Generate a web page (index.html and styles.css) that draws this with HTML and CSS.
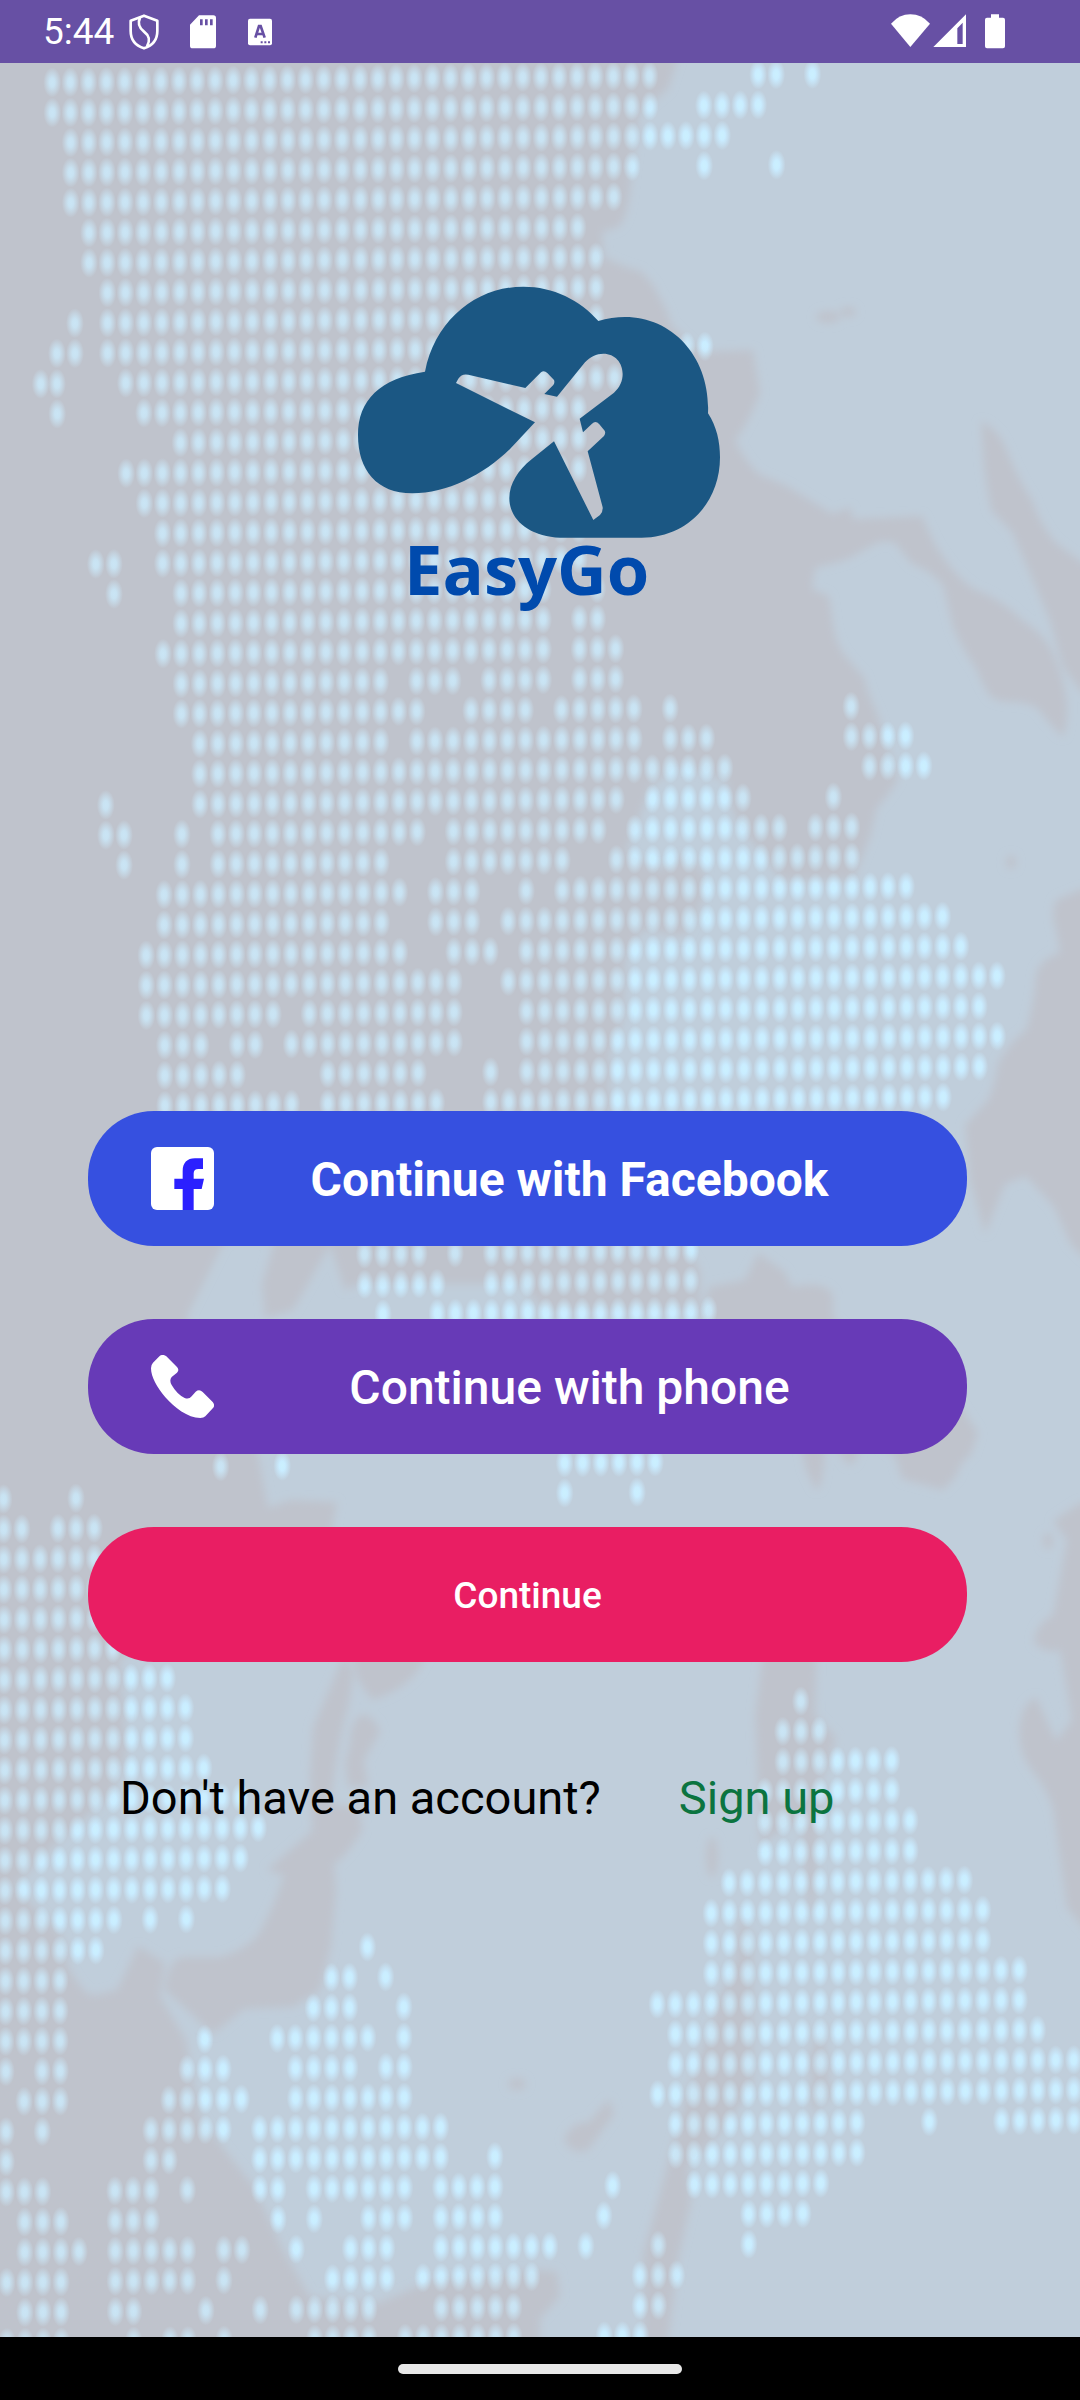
FILE: index.html
```html
<!DOCTYPE html>
<html lang="en">
<head>
<meta charset="utf-8">
<meta name="viewport" content="width=device-width, initial-scale=1">
<title>EasyGo</title>
<link rel="stylesheet" href="styles.css">
</head>
<body>
<header class="status-bar">
  <div class="status-left">
    <span class="clock">5:44</span>
    <svg width="30" height="36" viewBox="298 41 90 108" aria-hidden="true">
      <path d="M343 46 L383 61 V92 C383 118 368 136 343 144 C318 136 303 118 303 92 V61 Z" fill="none" stroke="#fff" stroke-width="8" stroke-linejoin="round"/>
      <path d="M331 52 C322 72 330 84 343 94 C360 107 362 120 352 138" fill="none" stroke="#fff" stroke-width="8"/>
    </svg>
    <svg width="28" height="36" viewBox="474 41 84 108" aria-hidden="true">
      <path fill="#fff" fill-rule="evenodd" d="M504 45 H547 Q555 45 555 53 V136 Q555 144 547 144 H485 Q477 144 477 136 V73 Z M507 57 V75 H515 V57 Z M522 57 V75 H530 V57 Z M537 57 V75 H545 V57 Z"/>
    </svg>
    <svg width="26" height="36" viewBox="651 41 78 108" aria-hidden="true">
      <rect x="654" y="55" width="72" height="80" rx="6" fill="#fff"/>
      <path d="M676 112 L687 77 H692 L704 112 M681 101 H699" fill="none" stroke="#6750a4" stroke-width="8"/>
      <path d="M692 123 H698 V129 H692 Z M703 123 H709 V129 H703 Z M714 123 H720 V129 H714 Z" fill="#6750a4"/>
    </svg>
  </div>
  <div class="status-right">
    <svg width="41" height="36" viewBox="30 41 123 108" aria-hidden="true">
      <path fill="#fff" d="M33 70 Q58 42 91 42 Q125 42 150 70 L91 140 Z"/>
    </svg>
    <svg class="signal" width="34" height="36" viewBox="159 41 102 108" aria-hidden="true">
      <path fill="#fff" fill-rule="evenodd" d="M258 42 V140 H160 Z M248 67 L232 84 V131 H248 Z"/>
    </svg>
    <svg width="22" height="36" viewBox="312 41 66 108" aria-hidden="true">
      <path fill="#fff" d="M333 42 H357 V52 H369 Q375 52 375 58 V138 Q375 144 369 144 H321 Q315 144 315 138 V58 Q315 52 321 52 H333 Z"/>
    </svg>
  </div>
</header>

<main class="screen">
  <svg class="backdrop" viewBox="0 63 1080 2274" preserveAspectRatio="xMidYMid slice" aria-hidden="true">
    <defs>
      <filter id="soft" x="-5%" y="-5%" width="110%" height="110%"><feGaussianBlur stdDeviation="4"/></filter>
      <radialGradient id="glow">
        <stop offset="0" stop-color="#0b2229"/>
        <stop offset=".3" stop-color="#0a2128" stop-opacity=".95"/>
        <stop offset=".65" stop-color="#0a2027" stop-opacity=".5"/>
        <stop offset="1" stop-color="#0a2027" stop-opacity="0"/>
      </radialGradient>
    </defs>
    <rect y="0" width="1080" height="2400" fill="#c0cedb"/>
    <g fill="#bfc3cc" filter="url(#soft)">
      <path d="M-40 20 H690 L668 89 L640 112 L631 178 Q628 226 615 228 L602 232 L604 257 Q625 268 640 271 Q655 285 657 293 Q668 310 671 325 L700 352 L753 350 L760 393 Q745 430 735 440 Q745 462 760 475 Q785 484 798 493 L833 514 L850 507 L853 519 L922 516 Q930 535 936 546 Q955 577 974 589 Q1003 600 1022 620 Q1042 633 1050 647 Q1064 675 1067 703 Q1068 725 1063 737 Q1050 725 1039 710 Q1030 702 1012 702 Q998 702 991 697 Q982 685 977 670 Q960 645 953 627 L943 585 Q930 570 912 564 L895 543 Q885 540 877 543 L846 560 L815 568 L812 589 L829 596 L833 624 Q835 640 843 653 Q855 668 864 677 Q868 695 877 713 L898 780 L884 800 L877 807 L870 837 L853 880 H781 L767 860 L747 837 L733 813 L726 780 L678 765 L650 787 L636 827 L626 853 L660 870 L685 855 L705 873 L702 903 L685 937 L643 930 L626 953 L623 1020 L609 1053 L609 1113 L700 1270 L700 1310 H544 L520 1284 H358 L345 1290 L330 1245 L293 1310 L265 1318 L262 1284 L275 1240 H225 L186 1318 L240 1400 L258 1454 L268 1508 L290 1500 L337 1502 L330 1540 L210 1600 L120 1660 L127 1754 L110 1798 L69 1831 L14 1886 L62 1935 L69 1968 Q85 1998 96 1995 L117 1990 L138 1946 L165 1963 L160 1996 L186 2040 L200 2116 L224 2149 L255 2188 L282 2248 L310 2297 L379 2303 L430 2281 L540 2270 L557 2272 L560 2296 L540 2319 V2400 H-40 Z"/>
      <path d="M981 421 Q998 430 1005 446 Q1018 480 1032 500 Q1040 525 1056 543 L1120 590 V720 L1080 690 L1063 667 L1050 621 L1032 578 L1012 532 L991 510 L984 468 Z"/>
      <path d="M1120 880 L1080 890 L1056 900 Q1050 915 1056 930 L1060 953 Q1043 957 1036 973 Q1034 1005 1026 1030 Q1010 1042 998 1063 Q995 1085 988 1100 L965 1125 L970 1180 L985 1234 L1005 1184 L1026 1176 L1054 1207 L1071 1245 L1120 1290 Z"/>
      <path d="M758 1253 L785 1272 L792 1287 Q825 1280 833 1295 V1318 L900 1380 L950 1390 L978 1433 L971 1454 Q958 1465 957 1475 L943 1490 L902 1479 L895 1456 L860 1430 Q860 1465 848 1465 L838 1450 L825 1440 Q824 1488 816 1490 L806 1470 L800 1440 L702 1318 L709 1287 L745 1280 Z"/>
      <path d="M344 1655 L353 1672 Q350 1705 344 1721 Q335 1760 331 1803 L358 1809 Q362 1820 362 1831 Q345 1858 334 1864 L336 1891 L331 1946 L320 1990 L293 2007 L244 2009 L213 2034 L165 1990 Q168 1960 182 1957 L220 1957 Q245 1950 258 1935 Q275 1905 284 1875 L267 1870 L312 1831 L310 1776 L313 1727 Z"/>
      <path d="M350 1650 H430 L417 1672 Q400 1692 372 1700 L358 1680 Z"/>
      <path d="M365 1714 Q378 1722 380 1732 L364 1760 L368 1787 L348 1787 L345 1763 L350 1743 Q350 1718 365 1714 Z"/>
      <path d="M765 1640 H817 L815 1715 L836 1738 L822 1780 L815 1908 H808 L800 1820 L760 1844 L755 1715 Z"/>
      <path d="M740 1914 L753 1938 V2084 L726 2125 L688 2167 L691 2202 L678 2260 L667 2350 H643 V2255 L667 2167 L685 2102 L716 2008 L735 1960 Z"/>
      <path d="M822 2020 L831 2096 L812 2114 L810 2055 Z"/>
      <path d="M564 2138 Q575 2120 588 2123 L609 2099 L614 2114 L588 2150 Q570 2156 564 2138 Z"/>
      <path d="M1120 1500 L1080 1503 L1053 1521 L1067 1540 L1053 1615 Q1035 1625 1034 1642 Q1045 1655 1060 1650 L1072 1720 L1056 1741 L1036 1697 Q1020 1705 1019 1732 Q1020 1755 1030 1768 Q1048 1790 1053 1809 L1067 1908 L1120 1970 Z"/>
      <ellipse cx="712" cy="1857" rx="6" ry="20"/>
      <ellipse cx="828" cy="317" rx="12" ry="6"/>
      <ellipse cx="848" cy="312" rx="8" ry="5"/>
      <ellipse cx="1011" cy="862" rx="5" ry="7"/>
      <ellipse cx="517" cy="2084" rx="9" ry="6"/>
      <ellipse cx="1048" cy="1541" rx="5" ry="8"/>
    </g>
    <g id="dots" class="dots" fill="url(#glow)"></g>
  </svg>

  <svg class="logo" viewBox="0 0 1200 1050" role="img" aria-label="EasyGo">
    <path fill="#1b5783" d="M255 305 C285 150 410 50 550 50 C640 50 720 90 775 153 C800 145 830 141 855 141 C1000 141 1112 265 1104 430 C1130 470 1140 515 1140 562 C1140 700 1040 803 905 803 L660 803 C570 800 508 750 508 685 C508 640 535 600 575 568 L642 514 L760 750 L780 735 Q789 727 788 712 L743 544 L792 498 Q798 490 794 482 L778 463 Q767 450 756 461 L729 487 L719 446 L822 368 C840 352 848 332 848 312 C848 278 825 251 790 251 C770 251 750 260 735 277 L651 380 L613 372 L640 345 Q645 338 642 330 L622 309 Q612 299 603 307 L556 354 L385 314 Q365 310 355 326 L348 339 L585 457 L510 537 C430 615 320 670 217 670 C110 670 54 600 54 495 C54 390 120 325 255 305 Z"/>
    <text class="logo-name" x="192" y="975">EasyGo</text>
  </svg>

  <div class="actions">
    <button class="btn btn-facebook" type="button">
      <svg width="63" height="63" viewBox="0 0 189 189" aria-hidden="true">
        <rect width="189" height="189" rx="18" fill="#fff"/>
        <path fill="#2b20ff" d="M95 189 V126 H70 V95 H95 V72 C95 48 108 34 132 34 H156 V66 H142 C133 66 128 70 128 79 V95 H159 L152 126 H128 V189 Z"/>
      </svg>
      <span class="btn-label">Continue with Facebook</span>
    </button>
    <button class="btn btn-phone" type="button">
      <svg width="63" height="63" viewBox="0 0 189 189" aria-hidden="true">
        <path fill="#fff" d="M26 3 Q36 -4 46 4 L78 36 Q86 46 78 53 L62 66 Q54 76 62 90 Q78 118 101 129 Q114 134 122 124 L134 110 Q145 101 155 111 L185 141 Q193 151 186 159 L163 184 Q158 189 148 189 C110 189 70 158 43 127 C18 98 0 65 0 40 Q0 29 6 23 Z"/>
      </svg>
      <span class="btn-label">Continue with phone</span>
    </button>
    <button class="btn btn-continue" type="button"><span class="btn-label">Continue</span></button>
  </div>

  <p class="signup">
    <span>Don't have an account?</span>
    <a href="#signup">Sign up</a>
  </p>
</main>

<footer class="nav-bar"><span class="nav-handle"></span></footer>
<script src="dots.js"></script>
</body>
</html>
```
FILE: styles.css
```css
* {
  box-sizing: border-box;
}

body {
  margin: 0;
  min-height: 100vh;
  display: flex;
  flex-direction: column;
  font-family: Roboto, "Liberation Sans", sans-serif;
  background: #000;
}

.status-bar {
  height: 63px;
  padding: 0 74px 0 43px;
  display: flex;
  align-items: center;
  justify-content: space-between;
  background: #6750a4;
  color: #fff;
}

.status-left {
  display: flex;
  align-items: center;
  gap: 30px;
}

.status-right {
  display: flex;
  align-items: center;
  gap: 2px;
}

.clock {
  margin-right: -15px;
  font-size: 37px;
  line-height: 40px;
}

.signal {
  margin-right: 15px;
}

.screen {
  position: relative;
  flex: 1;
  display: flex;
  flex-direction: column;
  overflow: hidden;
  isolation: isolate;
  background: #c0cedb;
}

.backdrop {
  position: absolute;
  inset: 0;
  z-index: -1;
  width: 100%;
  height: 100%;
}

.dots {
  mix-blend-mode: plus-lighter;
}

.logo {
  align-self: center;
  width: 400px;
  height: 350px;
  margin-top: 207px;
}

.logo-name {
  font: bold 206px "Open Sans", "Noto Sans", sans-serif;
  fill: #004aad;
}

.actions {
  display: flex;
  flex-direction: column;
  gap: 73px;
  margin-top: 491px;
  padding: 0 113px 0 88px;
}

.btn {
  display: flex;
  align-items: center;
  gap: 21px;
  height: 135px;
  padding: 0 63px;
  border: 0;
  border-radius: 66px;
  color: #fff;
  font-family: inherit;
  font-size: 48px;
  font-weight: 500;
  line-height: 56px;
}

.btn-label {
  flex: 1;
  padding-top: 2px;
  text-align: center;
}

.btn-facebook {
  background: #3650e0;
  font-weight: 700;
}

.btn-phone {
  background: #673ab7;
}

.btn-continue {
  background: #e91e63;
  font-size: 37px;
}

.signup {
  display: flex;
  gap: 78px;
  margin: 108px 0 0;
  padding: 0 120px;
  font-size: 47px;
  line-height: 56px;
  color: #000;
}

.signup a {
  color: #0b7440;
  text-decoration: none;
}

.nav-bar {
  height: 63px;
  display: flex;
  align-items: center;
  justify-content: center;
  background: #000;
}

.nav-handle {
  width: 284px;
  height: 10px;
  border-radius: 5px;
  background: #e8e8e8;
}
```
FILE: dots.js
```js
// Lit columns of the dotted world map, keyed by row number.
// Small islands sit between the grid columns, hence the fractions.
const rows = {
  0: "2-35,41,42,44", 1: "2-35,38-41", 2: "3-39", 3: "3-34,38,42", 4: "3-33",
  5: "4-31", 6: "4-32", 7: "5-32", 8: "3.2,5-32", 9: "2.2,3.2,5-32,37,38",
  10: "1.3,2.2,6-33", 11: "2.2,7-31", 12: "9-31", 13: "6-31", 14: "7-27",
  15: "8-31", 16: "4.3,5.3,8-31", 17: "5.3,9-29,32", 18: "9-29,31,32", 19: "8-29,31-33",
  20: "9-20,22-24,26-29,31-33", 21: "9-22,25-28,30-34,36,46",
  22: "10-20,22-34,36-38,46-49", 23: "10-39,47-50", 24: "4.8,10-33,35-40,45",
  25: "4.8,5.8,9,11-22,24-32,34-42,44-46", 26: "5.8,9,11-20,24-30,33-46",
  27: "8-21,23-25,28,30-49", 28: "8-20,23-25,27-51", 29: "7-21,24-26,28-52",
  30: "7-24,27-54", 31: "7-14,16-24,28-53", 32: "8-10,12,13,15-24,28-54",
  33: "8-12,17-22,26,28-53", 34: "8-15,17-23,26-51",
  39: "19-22,24,26-37", 40: "19-23,26-37", 41: "20,23-38",
  46: "11,14.4,30-35", 47: "-1,3,30,34", 48: "-1,0,2-4", 49: "-1-4", 50: "-1-4",
  51: "-1-4", 52: "-1-5", 53: "-1-8", 54: "-1-9,43", 55: "-1-9,42-44",
  56: "-1-10,42-48", 57: "-1-12,41-48", 58: "-1-13,41-49", 59: "-1-12,41-49",
  60: "-1-11,39-52", 61: "-1-5,7,9,38-53", 62: "-1-4,19,38-53",
  63: "-1-2,17,18,20,38-55", 64: "-1-2,16-18,21,35-55", 65: "-1-2,10,14-19,21,36-56",
  66: "-1,1,2,9-11,15-18,20,21,36-58", 67: "0-2,8-12,15-21,35-58",
  68: "-1,1,7-11,13-23,36-46,50,54-58", 69: "-1,7,8,13-23,26,36-46",
  70: "-1-1,5-7,9,13,14,16-21,23-26,32.5,37-44", 71: "0-2,5-7,14,16,19-21,23-26,32,40-43",
  72: "0-3,5-9,11,12,15,18-20,23-29,31,35,40", 73: "-1-2,5-9,11,17-20,22-28,34-36",
  74: "0-2,5,6,10,13,15-19,23-27,34,35", 75: "-1-2,6,8,9,11,16-19,21-27,32-34"
};

const svgNS = "http://www.w3.org/2000/svg";
const layer = document.getElementById("dots");

for (const [row, spec] of Object.entries(rows)) {
  for (const part of spec.split(",")) {
    const [, from, to] = part.match(/^(-?[\d.]+)(?:-(\d+))?$/);
    for (let col = +from; col <= +(to ?? from); col++) {
      const gridY = 83 + 30.13 * row;
      const x = 16 + 18.1 * col + 0.004 * (gridY - 80);
      const dot = document.createElementNS(svgNS, "ellipse");
      dot.setAttribute("cx", x.toFixed(1));
      dot.setAttribute("cy", (gridY - 0.011 * x).toFixed(1));
      dot.setAttribute("rx", 9);
      dot.setAttribute("ry", 15);
      layer.append(dot);
    }
  }
}
```
